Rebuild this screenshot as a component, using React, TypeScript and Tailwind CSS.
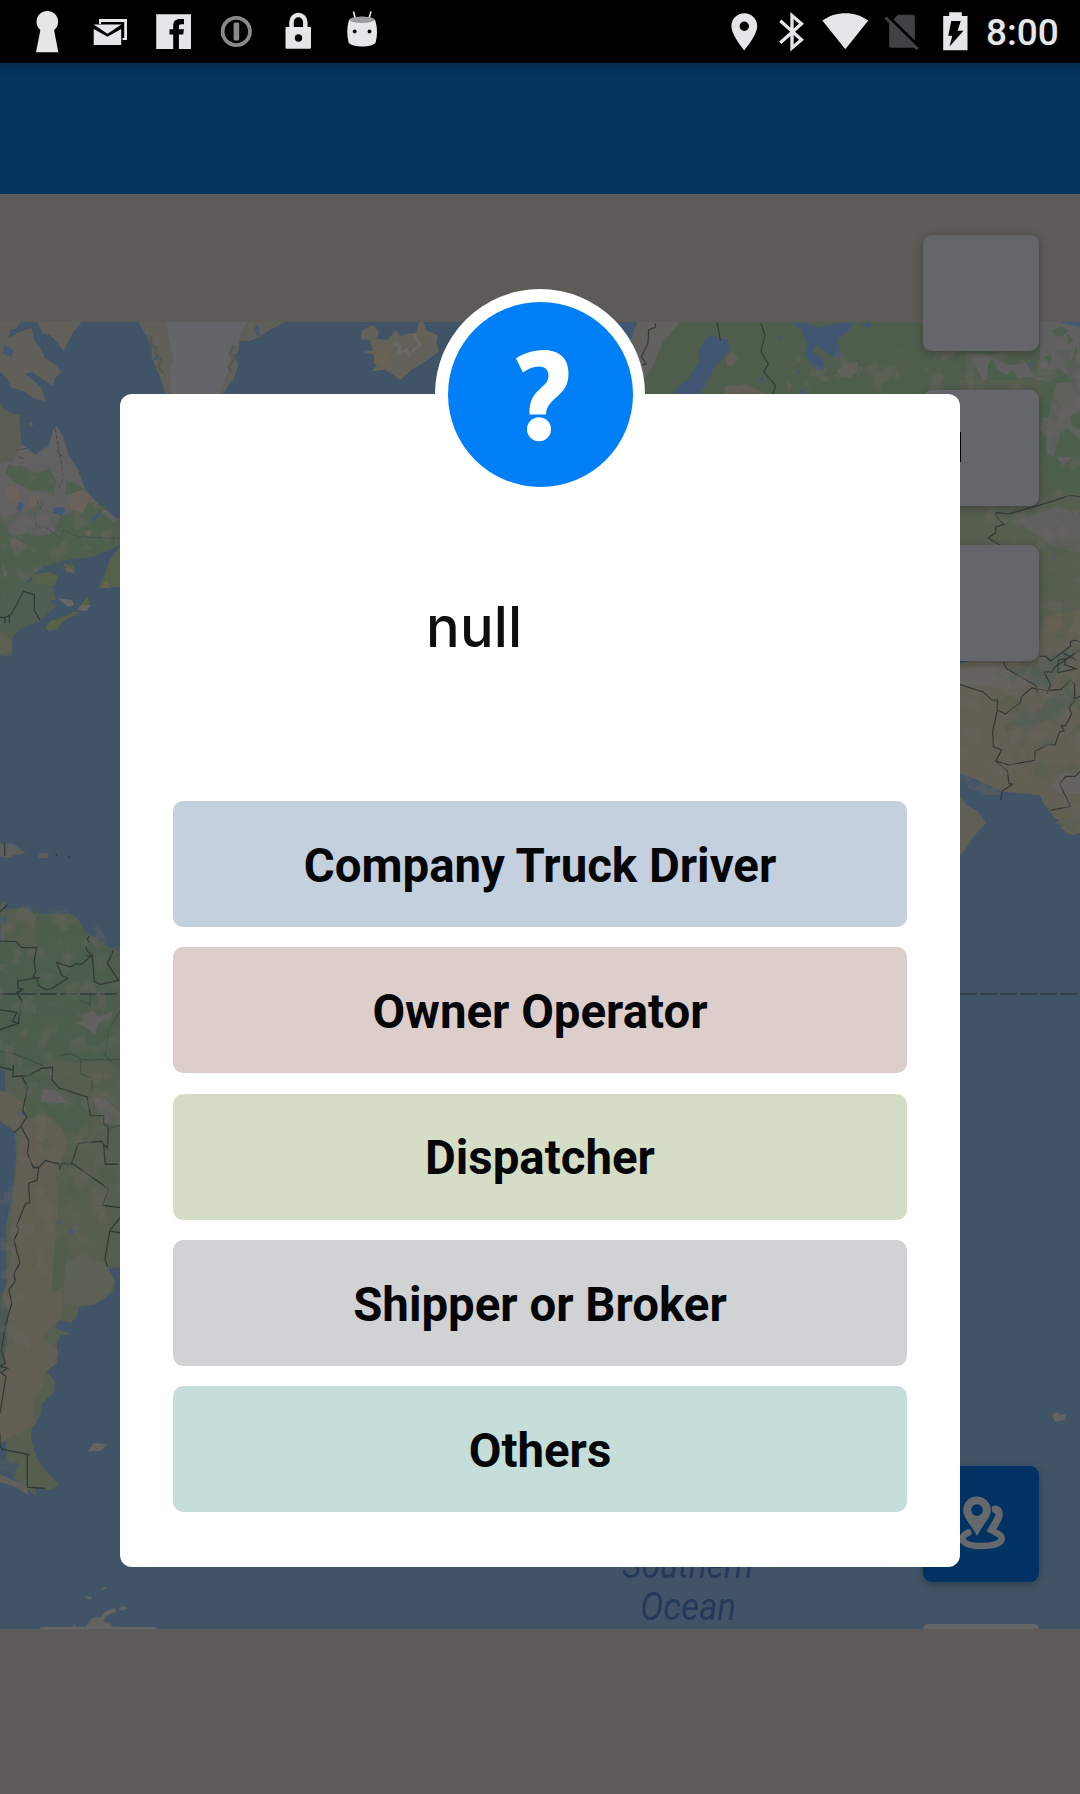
const ROLES = [
  { label: 'Company Truck Driver', tone: 'bg-[#c5d0de]' },
  { label: 'Owner Operator', tone: 'bg-[#dccfcb]' },
  { label: 'Dispatcher', tone: 'bg-[#d6ddc7]' },
  { label: 'Shipper or Broker', tone: 'bg-[#d1d2d4]' },
  { label: 'Others', tone: 'bg-[#c6deda]' },
];

function StatusBar() {
  return (
    <div className="flex h-[63px] shrink-0 bg-black text-[#e4e6e8]">
      <svg className="ml-[32px] h-[63px] w-[30px]" viewBox="32 0 30 63" fill="currentColor">
        <circle cx="47.3" cy="21.7" r="10.8" />
        <path d="M41 27h12.5l4.8 25.3H36z" />
      </svg>
      <svg className="ml-[28px] h-[63px] w-[40px]" viewBox="90 0 40 63" fill="currentColor">
        <path d="M99 19h28v21h-4.5v-2h1.700V22H101v2h-2z" />
        <path d="M93.700 24.500h27.800L107.500 33.800z" />
        <path d="M93.700 29l13.800 7.800L121.200 29v16H93.700z" />
      </svg>
      <svg className="ml-[24px] h-[63px] w-[40px]" viewBox="154 0 40 63">
        <path fill="currentColor" d="M156.200 14.200h34.800v34.800h-34.800z" />
        <path d="M173.200 49V34.500h-3.700v-5.300h3.700v-3.500c0-4.600 2.700-6.700 6.800-6.700h4v5.200h-2.600c-2 0-2.500.8-2.500 2.400v2.600h5l-.7 5.300h-4.300V49z" fill="#000" />
      </svg>
      <svg className="ml-[22px] h-[63px] w-[40px]" viewBox="216 0 40 63" fill="none">
        <circle cx="236.300" cy="31.500" r="13.700" stroke="#88898a" strokeWidth="3.800" />
        <rect x="233.600" y="22.500" width="5.600" height="18" rx="1.500" fill="#88898a" />
      </svg>
      <svg className="ml-[26px] h-[63px] w-[32px]" viewBox="282 0 32 63">
        <path d="M291.500 29v-7a6.900 6.900 0 0 1 13.800 0v7" fill="none" stroke="currentColor" strokeWidth="4.500" />
        <rect x="285.500" y="27" width="25.500" height="21.700" rx="1" fill="currentColor" />
        <circle cx="298.500" cy="38" r="3.700" fill="#000" />
      </svg>
      <svg className="ml-[28px] h-[63px] w-[40px]" viewBox="342 0 40 63">
        <path d="M353.500 11.500l2 8M371 11.500l-2.300 8" stroke="currentColor" strokeWidth="1.600" />
        <path d="M349 20c5-4.500 21-4.500 26 0 2.500 7 2.600 15 .5 23-5 4.800-21.500 4.800-26.800 0-2-8-2-16 .3-23z" fill="currentColor" />
        <ellipse cx="362" cy="19.800" rx="12.500" ry="3.100" fill="#999b9c" />
        <circle cx="354.700" cy="31.500" r="1.900" fill="#000" />
        <circle cx="369.500" cy="31.500" r="1.900" fill="#000" />
      </svg>
      <svg className="ml-[346px] h-[63px] w-[32px]" viewBox="728 0 32 63">
        <path fillRule="evenodd" fill="currentColor" d="M744.300 13.300c7.200 0 12.900 5.600 12.900 12.800 0 9.400-12.900 24.300-12.900 24.300s-12.900-14.900-12.900-24.300c0-7.200 5.700-12.800 12.900-12.800zm0 8.200a4.700 4.700 0 1 0 0 9.400 4.700 4.700 0 0 0 0-9.400z" />
      </svg>
      <svg className="ml-[16px] h-[63px] w-[30px]" viewBox="776 0 30 63" fill="none">
        <path d="M780.300 20.800l21.200 19L792 48V15.500l9.500 8.200-21.200 19" stroke="currentColor" strokeWidth="3.300" />
      </svg>
      <svg className="ml-[14px] h-[63px] w-[52px]" viewBox="820 0 52 63" fill="currentColor">
        <path d="M822.300 20.500c13.600-9.800 32.600-9.800 46 0L845.300 49.300z" />
      </svg>
      <svg className="ml-[10px] h-[63px] w-[40px]" viewBox="882 0 40 63">
        <path d="M898 14.700h14.500a2.300 2.300 0 0 1 2.300 2.300v28.500a2.300 2.300 0 0 1-2.300 2.300h-21a2.300 2.300 0 0 1-2.300-2.300V23.500z" fill="#414244" />
        <path d="M887 15.500L919 47" stroke="#000" strokeWidth="3.600" />
        <path d="M885.500 17.500L917.500 49" stroke="#414244" strokeWidth="3" />
      </svg>
      <svg className="ml-[18px] h-[63px] w-[32px]" viewBox="940 0 32 63">
        <path d="M943.200 16h6v-3.700h12.600V16h5.700v34.200h-24.300z" fill="currentColor" />
        <path d="M951.200 21h9.600L957.500 30.700h6L949.500 46.500 952.300 35.700h-4z" fill="#000" />
      </svg>
      <span className="ml-[14px] mt-[11px] font-['Roboto'] text-[37px] leading-[43px] font-medium whitespace-nowrap">8:00</span>
    </div>
  );
}

/* World map, coastlines and borders. Each group is drawn in its own local scale. */
function WorldMap() {
  return (
    <svg className="block h-[1307px] w-full shrink-0" viewBox="0 322 1080 1307" fill="none" preserveAspectRatio="none">
      <defs>
        <filter id="terrain" x="0" y="0" width="100%" height="100%" colorInterpolationFilters="sRGB">
          <feTurbulence type="fractalNoise" baseFrequency="0.055" numOctaves="4" seed="8" />
          <feColorMatrix values="0 0 0 0 .41  0 0 0 0 .395  0 0 0 0 .375  9 0 0 0 -4.900" />
          <feComposite in2="SourceGraphic" operator="in" />
        </filter>
        <filter id="forest" x="0" y="0" width="100%" height="100%" colorInterpolationFilters="sRGB">
          <feTurbulence type="fractalNoise" baseFrequency="0.05" numOctaves="4" seed="21" />
          <feColorMatrix values="0 0 0 0 .29  0 0 0 0 .37  0 0 0 0 .29  9 0 0 0 -4.700" />
          <feComposite in2="SourceGraphic" operator="in" />
        </filter>
      </defs>
      <path d="M0 322h1080v1307H0z" fill="#415467" />

      {/* North Atlantic */}
      <g transform="translate(0 300) scale(.33333)">
        <path d="M0 66h60L50 85 30 90 25 115 60 95 95 85 105 125 125 150 135 175 160 190 185 215 165 235 160 257 130 240 95 215 75 222 100 240 125 265 138 305 100 295 75 275 60 270 35 265 20 235 0 215z" fill="#605f59" />
        <path d="M110 66h135L220 95 210 115 190 152 170 125 150 105 130 100z" fill="#61605b" />
        <path d="M12 132l28 20-5 20-28-12zM60 70l15 12-10 8z" fill="#42566f" />
        <path d="M0 310l15 22 45 15 5 85 40 32 40-25 15-50 10-12 20 35 15 50 30 50 20 55 35 40 35 28 30 25 0 70-70 15-80 22-80 10-60 30-40 35-30 50-40 15z" fill="#626161" />
        <path d="M0 310l15 22 45 15 5 85-25 50-40 10z" fill="#5a5d53" />
        <path d="M60 495l50 25 40-15 20 40-10 45-30-15-45-5-40-25-30-25 10-25 25 5zM200 540l35 15 25 20-35 5-30 5zM270 605l50 15-15 15 35 30 20-10v50l-80 15-85 5-60 20-60 50-60 60-35 40V640l30 40 30 30 40-10 20 10 60-10 20-50 50-20z" fill="#4f5f4e" />
        <path d="M15 565l30-10 15 40-30 20zM90 590l30-15-5 40-25 10zM215 580l35-10 20 20-20 50-40-15zM275 690l-10 25-10-20z" fill="#6b6359" />
        <path d="M50 625l10-18 10 5-8 28zM160 625l30-5 5 15-10 12-25-8zM275 655l30-25-8 20-20 15z" fill="#3f5879" />
        <path d="M0 640l20 30 10 50 40 25 45-25 80-10 165-5v30l-80 35-80 10-70 20-40 35-45 50-45 20z" fill="#4f5f4e" />
        <path d="M30 715l25 5 30 20-25 20-12 12-15-30zM5 790l18 30-10 15zM190 790l30 15 5 15-25-5z" fill="#64625c" />
        <path d="M360 740v120l-65 5 15-30 20-55z" fill="#566149" />
        <path d="M300 865l20-22 10 20z" fill="#6b654d" />
        <path d="M0 895l60-30 70-45 45 5-10 30-40 20 38 10 5 15z" fill="#53604b" />
        <path d="M62 347v40l5 45M165 385l10 55 10 55 5 40-15 30M110 600l20 40M135 680l45 35 10-25 45 20 120 5M340 705v25M105 645l5 40" stroke="#454b4b" strokeWidth="3" strokeDasharray="14 5" />
        <path d="M50 450l30-5M55 470l20 8M168 450l20 20" stroke="#484949" strokeWidth="3" />
        <path d="M415 66h440l-40 20-30 20-40 18-25-2-5 35-12 8 12 30-15 45-15 15-20 37H500l-20-60-10-25-15-35 0-35-25-45z" fill="#605f5a" />
        <path d="M500 66h240l-15 40-15 30-22 30 5 30-15 30-20 57H515l-5-75 10-30-15-65z" fill="#646569" />
        <path d="M740 66h115l-40 20-30 20-40 18-30-5z" fill="#5e5f5a" />
        <path d="M440 105l15 10-5 15 20 15-5 15 20 20-10 20 15 20M700 135l-10 25 15 15-20 25 10 15M765 85l20 25" stroke="#565950" strokeWidth="8" />
        <path d="M450 185l20-20 8 12zM765 75l15 10-10 25z" fill="#415873" />
        <path d="M1088 90l30-15 20 20-8 20 32 5 25-30 15 18 25-10 20 8 10-40 12-5 10 30 35 15-5 20 7 30-35 25-45 28-35 30-45-30-40 5 15-20-10-30-32-8 30-5-10-30-28-3z" fill="#62615a" />
        <path d="M1130 125l45 20-20 60-35-15zM1265 75l20 30-25 20z" fill="#686154" />
        <path d="M1180 130l20 10-5 20 25-10 10 20M1240 100l20 35-25 20" stroke="#6a6966" strokeWidth="10" />
        <path d="M85 372l8-8 6 12-10 6z" fill="#5b615c" />
      </g>
      {/* Atlantic coast and Caribbean */}
      <g transform="translate(0 560) scale(.33333)">
        <path d="M0 100l70-35 90 15 5 30-15 15 20 12-50 45-60 25-20 20-5 30 5 25-15 10L0 285z" fill="#4f5e50" />
        <path d="M0 215l22 5-2 10 17 12-2 28-15 10-20 5z" fill="#5d5f51" />
        <path d="M90 45l60-10 25 12-10 18-60 5z" fill="#55614a" />
        <path d="M135 205l15-22 50-15 25-15 15 5-50 25-20 25-20 5zM240 140l20-30 10 20-8 22z" fill="#566349" />
        <path d="M175 115l40 5 8 15-20 5zM230 150l15-15 28 0-15 18z" fill="#666664" />
        <path d="M190 10l30 5 10 15-20-5z" fill="#576149" />
        <path d="M0 850l40 2 38 28-35 5-15 10-28-5zM118 880h27l-3 14h-27z" fill="#5c605b" />
        <path d="M14 850v38" stroke="#353b39" strokeWidth="4" />
        <circle cx="170" cy="884" r="3.500" fill="#303c45" />
        <circle cx="208" cy="891" r="3" fill="#303c45" />
      </g>
      {/* South America */}
      <g transform="translate(0 880) scale(.33333 .40833)">
        <path d="M0 60l20-8-10 20 30-2 30-2 30 12 80 6 25-5 25 10 15 20 5 15 45 20 10 15 35 7 20 10v770l-45 5 20 15 12 15-10 25-25 20-45 8-28-3-10 40-18 12-35-8-5 8-2 12 25 10 10 0 2 8-25-2-10 22 0 20-45 30-2 18 22 5 20 20-5 28-35 25-5 30-25 30-3 30 16 40 22 30 48 40-28 12-45-3 3 18-45-25-45-40V590z" fill="#565e4f" />
        <path d="M0 1380V1030l25-50 10-80 0-80 15-120 10-80-60-25v-80l40 10 40 30 95 25 25 70-20 60-15 10 10 60-10 110 20 80 5 60-2 30-10 20-45 30 0 20 22 5 20 20-5 28-35 25-5 30-25 30-3 42 10 20z" fill="#615f54" />
        <path d="M0 150l50-2 60 20v-90l80 20 60 25 70 40 40 20v280l-45-20-100 5-60-10-70 30-80 0-45-20z" fill="#4d5d4d" />
        <path d="M165 885l40-10-5 60-10 60-35 15zM120 95l60 15 50 40-50 80-40-20zM65 480l75-20 20 50 90 20 20 60-60 40-70-60-60 20z" fill="#4e5d4d" />
        <path d="M195 940l50-25 70 25 30 40-15 30-45 30-55 5-40-10z" fill="#5d6054" />
        <path d="M250 330l30-10 15 15 45-15-10 25-35 5-10 30-30-20-30-10 25-5zM280 530l40 10 40 30v30l-40-5-30-30zM130 510l40 5 30 30-50 5-30-10z" fill="#63615f" />
        <path d="M0 590l45 25 3 70-12 90-20 85-16 85z" fill="#415467" />
        <path d="M0 1010l25 40-5 90-12 50-8 20z" fill="#4a594f" />
        <path d="M5 95l18-10-10 25zM205 858l25-2-10 16zM50 570h25v10zM168 835l15 0-5 8z" fill="#42597a" />
        <path d="M0 1420l20-5 10 15 20-5 8 14-14 4 6 17-20-5-15-12-15 5z" fill="#465864" />
        <path d="M0 1455l40 15 42 15 3 22-45-22-40-10z" fill="#605f5b" />
        <path d="M0 420l40 5 90 30M180 430l30-5 40 15 110 0M242 440v35l35 10-3 30M360 320l-35 50-10 60 20 15M240 295l30 10 0-25M330 608l30-8" stroke="#3e4942" strokeWidth="2.500" />
        <path d="M0 458l38 8 3-12-3 27 47-2 40-18 33-2-2 30 20 20 85 22 10 46h40v20l14 8-2 48-12-2 5 45h38M323 658l-20-18-68 5-20 48 112 64-20 40 60 6M65 480l18 28-15 56 12 16-18 25-20 14M62 602l25 38-5 30 17 32 17 5-5 28-25 8 3 47-12 2-28 55 8 8-15 28 18 55-18 25 3 20-18 20 8 35-18 50-13 65 12 30-15 8 22 5-20 10 15 10-18 90M98 705l20-2 18-16 40 8 3 12 8-14 32 4M360 828l-30 30-15 70 8 20M330 860l30 4M0 1355v32l8 8 80 12M82 1407v80l52 3M0 366l55-15-18-5 14-22-50-6M55 350l10-55-15-20 20-8" stroke="#303735" strokeWidth="3.500" />
        <path d="M262 1400l20-22 40 5-20 15-35 2z" fill="#656360" />
      </g>
      <path d="M0 994h120M960 994h120" stroke="#303a3e" strokeWidth="1.300" strokeDasharray="17 3" />

      {/* Antarctic islands */}
      <g transform="translate(0 1380) scale(.33333)" fill="#636362">
        <path d="M300 632l10-12 15 2zM252 650h24l-5 10zM255 745l20-30 30-5 10-15 30-12 3 12-28 12-12 20 20 0 12 18z" />
        <path d="M355 685l15-6 14 5-18 10zM220 723l6 20h-4z" />
      </g>

      {/* Scandinavia and Russia */}
      <g transform="translate(630 190) scale(.33333)">
        <path d="M0 396h1350v460H30z" fill="#4f5d4d" />
        <path d="M0 440l25-44h125l-50 60-35 80-30 40z" fill="#62615d" />
        <path d="M230 440l20-4 18 12 25 0 5 30-15 25-25 20-15 30-30 55-5 60H125l0-50 20-30 30-20 15-25 20-30-5-30 15-25zM480 400l45-2 40 15 65-15 40 0-15 25-35 25 8 30 8 22-15 5-30-15-35-30-5 30 20 10 12 20-5 20-20 2-15-25-20-20 10-35-20-45zM690 400h35l-5 15zM385 570l15-12-5 25zM440 435l20 8-15 5zM500 540l12 5-5 8zM510 595l20 15-15 2z" fill="#415672" />
        <path d="M285 505l20-20 20 15-15 25-20 3zM280 590l60-8 50 20 30 12H290zM620 540l40-20 25-5-5 30-20 20-25-8zM470 570l15 15-10 20z" fill="#615f58" />
        <path d="M1020 490l60 5 50 30 60-5 20 40 60 10 80 40v250H1230l-20-60-140-200z" fill="#616161" />
        <path d="M1230 396h120v200l-60-60-60 0z" fill="#616161" />
        <path d="M1075 520l15-15 10 35 35 15 10-15 20 25 40-5 45 30 30 30 30-5 15 45-60 15-60-25H1065l5-60zM1240 500l25-5-5 35zM1265 420l30-10 20 12-20 18-20-3zM1310 430l20 20-15 15zM1340 460v50l-15 2z" fill="#4c5e4c" />
        <path d="M1195 520l12-10-5 25zM1290 396h60v15z" fill="#435978" />
        <path d="M76 400v12l-20 8-2 40-20 40 14 22-12 3M262 398l9 54M392 400l13 35-12 50 22 38-14 22 36 42-10 27" stroke="#323936" strokeWidth="3.500" />
        <path d="M-60 396h80l-2 10-18 50h-60z" fill="#415672" />
      </g>
      {/* Central Asia */}
      <g transform="translate(900 380) scale(.33333)">
        <path d="M180 0h360v820H180z" fill="#565e50" />
        <path d="M420 0h120v340l-60-10-60-80z" fill="#4c5f4d" />
        <path d="M470 10l70-10v90l-30 20 10 30 20 10v30l-40-40-10 20-50-30zM430 110l40 0 10 60-20 60-20-10 0-50-20-20zM470 230l50 0-30 30zM350 420l120-40 70 20v120l-80-20-60-40z" fill="#60605d" />
        <path d="M180 850l230-50 20-70 110-50v680l-20 5-50-10-50-110-110-10-90-40-40-15z" fill="#625f55" />
        <path d="M180 870l100-20 120 60-60 20-80-10-80 0zM450 1220l40-40 50 0v60l-60 0z" fill="#64635f" />
        <path d="M330 1030l40-35 40 5 40-50 70-20 5 30-60 50-50 20-30 20zM320 860l80 10 50-40 50-20 30 10-60 60-20 50-60-20z" fill="#565e55" />
        <path d="M430 710l110-20v60l-50 15-60-10z" fill="#666151" />
        <path d="M180 1212l15 2 35 35 40 9 115-2 25-5 30 30 25 35 35 12-20 15 40 28 20-5v134H180z" fill="#415467" />
        <path d="M180 1250l20 25 35 20 23 35-38 40-25 40-15 20z" fill="#5f5f55" />
        <path d="M465 1330l20 5 40 30 15-35v-20h-50z" fill="#5c5f53" />
        <path d="M458 525l10 5-5 8zM185 575l5 0z" fill="#42597a" />
        <path d="M298 494l-33-20 22-16 0-18 25-6-18-18-8-14 5-4 35 4 138-40 45-16 38 6 5 45h30M180 914l70 22 25 24h17v30l25 12 18-16 25-16 5-20 30-26 45 8 44-4 28-30 12 16 0 42 18-8M310 846l10 20 90 52 2 20M292 990l-14 65 2 45 25 10-18 33 35 30 5 38 10 2-30 20-5 27M290 1143l35 12 80-14v-28l42-20 18 2 14-40 14-2-10-16h14l18-36-8-20 18-20M418 829h20l14 14 60-45 0-14 12-4 18 6M432 876l20 38-12 28M432 876h25l8-16 75-50M472 840l25-4-3 18 34 12-54 12v-38zM490 820l40 20M540 1175l-15 14h-28l-18 22 32 68-60 12" stroke="#303735" strokeWidth="3.500" />
      </g>
      <g opacity=".4" filter="url(#terrain)">
        <path d="M0 470l20-20 30-15 30 55 35 30v20L45 565 0 600zM0 905l20-7 65 14 20 23 15 7v250l-25 50-40 10-15 40-10 60-28 0-2-150 14-50 3-60-17-30zM780 350h300v200H925zM960 560h120v265l-20 0-20-30h-60l-20-12z" fill="#fff" />
      </g>
      <g opacity=".35" filter="url(#forest)">
        <path d="M0 520l40-20 35 10 40 20-20 28-60 20-35 22zM0 915l50-8 50 30 20 10v240l-50 20H50L30 1100 25 1070zM1040 350h40v300h-40zM960 560l120 10v200l-60 15z" fill="#fff" />
      </g>
      {/* Eastern Canada and Venezuela borders */}
      <g transform="translate(0 560) scale(.33333)" stroke="#303735" strokeWidth="3.500">
        <path d="M0 172h15l18-8 38-70 32 10v48l17 28M15 170v20M28 168v22" />
        <path d="M0 1055l22-20M0 1143l48 2 18 18h44l-8 42 5 30-8 15 12 5 5 22 22 12 15-2 50-32-18-8-15-40 40 14 20-10 15 2 32-28-16-12-2-12M260 1188h17l6 77 18 8 55-12-34-50 18-40M118 1253l-65 10v20l15 5-15 14 12 20M268 1128l-6 10 6 10" />
      </g>
      <path d="M1052 1415l5-3 4 3 6-2-2 7-10 2z" fill="#626262" />
      <g fill="#243a58" fontFamily="Roboto, sans-serif" fontStyle="italic" fontSize="39">
        <text x="622" y="1578" textLength="131" lengthAdjust="spacingAndGlyphs">Southern</text>
        <text x="640" y="1619.500" textLength="96" lengthAdjust="spacingAndGlyphs">Ocean</text>
      </g>
    </svg>
  );
}

function MapControls() {
  return (
    <div className="absolute top-[235px] right-[41px] flex h-[1394px] w-[116px] flex-col overflow-visible">
      <div className="h-[116px] shrink-0 rounded-[9px] bg-[#656669] shadow-[0_2px_9px_rgba(0,0,0,0.3)]" />
      <div className="mt-[39px] h-[116px] shrink-0 rounded-[9px] bg-[#656669] shadow-[0_2px_9px_rgba(0,0,0,0.3)]">
        <div className="mt-[42px] ml-[37px] h-[30px] w-px bg-black" />
      </div>
      <div className="mt-[39px] h-[116px] shrink-0 rounded-[9px] bg-[#656669] shadow-[0_2px_9px_rgba(0,0,0,0.3)]" />
      <div className="mt-auto flex h-[116px] shrink-0 rounded-[9px] bg-[#003263] shadow-[0_2px_9px_rgba(0,0,0,0.3)]">
        <svg className="h-[116px] w-[116px]" viewBox="0 0 116 116">
          <path d="M45.500 66.500c-12 5.500-6 13.500 13.500 13.500s26-8 13.500-13.500" fill="none" stroke="#66696c" strokeWidth="6.500" strokeLinecap="round" />
          <path d="M69 45.500c3-4 7-2 7 3 0 4.500-3.500 8-9 18.500" fill="none" stroke="#66696c" strokeWidth="7.500" />
          <path fillRule="evenodd" stroke="#003263" strokeWidth="2" paintOrder="stroke" d="M54 30.500c7.700 0 13.800 6.200 13.800 13.800 0 8-8.500 15-13.800 25.700-5.300-10.700-13.800-17.700-13.800-25.700 0-7.600 6.100-13.800 13.800-13.800zm0 7.800a5.800 5.800 0 1 0 0 11.600 5.800 5.800 0 0 0 0-11.600z" fill="#66696c" />
        </svg>
      </div>
      <div className="mt-[42px] h-[5px] shrink-0 rounded-t-[9px] bg-[#646567]" />
    </div>
  );
}

function RoleDialog() {
  return (
    <div className="absolute top-[289px] left-[120px] flex w-[840px] flex-col">
      <div className="h-[105px] shrink-0" />
      <div className="relative flex h-[1173px] flex-col items-center rounded-[12px] bg-white">
        <div className="absolute top-[-105px] flex h-[210px] w-[210px] items-center justify-center rounded-full bg-white">
          <svg className="h-[185px] w-[185px]" viewBox="0 0 185 185">
            <circle cx="92.500" cy="92.500" r="92.500" fill="#007ff6" />
            <path d="M68 56.500C82 46 120.500 40 120.500 71.500c0 24-21.500 23-22.500 41H81.500c-1-27 19-25 19-39 0-12-15-11-25.500-3z" fill="#fff" />
            <circle cx="91" cy="127.200" r="12" fill="#fff" />
          </svg>
        </div>
        <div className="mt-[208px] flex h-[50px] w-full pl-[306px]">
          <p className="font-['Inter'] text-[56px] leading-[50px] font-medium tracking-[0.2px] text-[#0d0e10]">null</p>
        </div>
        <div className="mt-[149px] flex w-[734px] flex-col gap-[20.300px]">
          {ROLES.map((role) => (
            <button key={role.label} className={`${role.tone} flex h-[126px] w-full items-center justify-center rounded-[10px] pt-[5px] font-['Roboto'] text-[47.400px] leading-none font-bold text-[#050608]`}>
              {role.label}
            </button>
          ))}
        </div>
      </div>
    </div>
  );
}

export default function App() {
  return (
    <div className="relative flex h-[1794px] w-[1080px] flex-col overflow-hidden bg-[#5c5b58]">
      <StatusBar />
      <div className="h-[131px] shrink-0 bg-gradient-to-b from-[#062b50] to-[#04345f] to-10%" />
      <div className="h-[128px] shrink-0" />
      <WorldMap />
      <div className="absolute top-[1627px] left-[40px] h-[2px] w-[116px] rounded-t-[9px] bg-[#646567]" />
      <MapControls />
      <RoleDialog />
    </div>
  );
}
